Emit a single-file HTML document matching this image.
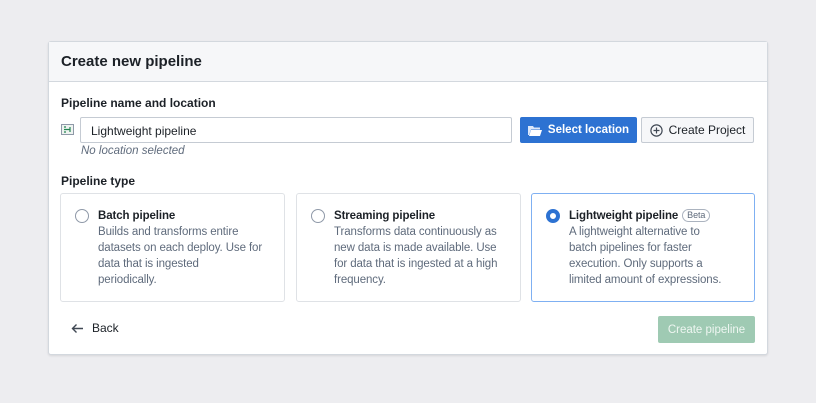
<!DOCTYPE html>
<html><head><style>
*{box-sizing:border-box;margin:0;padding:0}
body{width:816px;height:403px;background:#ededf0;font-family:"Liberation Sans",sans-serif;color:#1c2127;position:relative;overflow:hidden}
.dlg{position:absolute;left:48px;top:41px;width:720px;height:314px;background:#fff;border:1px solid #d3d8de;border-radius:3px;box-shadow:0 1px 2px rgba(0,0,0,.1)}
.hdr{height:40px;background:#f6f7f9;border-bottom:1px solid #d3d8de;padding:11px 12px;font-size:15px;font-weight:bold}
.abs{position:absolute}
.lbl{font-size:12px;font-weight:bold}
.inp{left:31px;top:75px;width:432px;height:26px;border:1px solid #c5cbd3;border-radius:2px;font-size:12px;padding:6px 10px}
.btn{top:75px;height:26px;border-radius:2px;font-size:12px;display:flex;align-items:center;justify-content:center;gap:6px}
.card{top:151px;height:109px;border:1px solid #dfe2e6;border-radius:3px;padding:14px 8px 0 37px;font-size:11.5px;line-height:16px;color:#5f6b7c;white-space:nowrap;letter-spacing:-0.1px}
.card b{color:#1c2127;display:block;line-height:16px;font-size:11.5px}
.radio{position:absolute;left:14px;top:15px;width:14px;height:14px;border:1.5px solid #8f99a8;border-radius:50%}
.card.sel{border:1px solid #7fb0f2}
.sel .radio{border:4px solid #2d72d2;background:#fff}
.beta{display:inline-block;font-size:9px;font-weight:normal;color:#5f6b7c;border:1px solid #abb3bf;border-radius:8px;padding:0 4px;line-height:11px;margin-left:4px;vertical-align:1px}
</style></head><body>
<div class="dlg">
<div class="hdr">Create new pipeline</div>
<div class="abs lbl" style="left:12px;top:54px">Pipeline name and location</div>
<svg class="abs" style="left:12px;top:82px" width="13" height="11" viewBox="0 0 13 11"><rect x=".5" y=".5" width="12" height="10" fill="#eef3f0" stroke="#8f99a8"/><path d="M3 3h2M3 5.5h2M3 8h2M5 5.5h4M9 3v5" stroke="#238551" stroke-width="1.2" fill="none"/></svg>
<div class="abs inp">Lightweight pipeline</div>
<div class="abs" style="left:32px;top:103px;font-size:11.5px;font-style:italic;color:#5f6b7c">No location selected</div>
<div class="abs btn" style="left:471px;width:117px;background:#2d72d2;color:#fff;font-weight:bold;font-size:11.5px"><svg width="14" height="11" viewBox="0 0 14 11"><path d="M0 1h5l1 1.5h6v2H3L1 10H0z" fill="#dbe7fa"/><path d="M3 5h11l-2 6H1z" fill="#fff"/></svg>Select location</div>
<div class="abs btn" style="left:592px;width:113px;background:#f6f7f9;border:1px solid #c5cbd3"><svg width="13" height="13" viewBox="0 0 13 13"><circle cx="6.5" cy="6.5" r="5.6" fill="none" stroke="#404854" stroke-width="1.2"/><path d="M6.5 3.5v6M3.5 6.5h6" stroke="#404854" stroke-width="1.2"/></svg>Create Project</div>
<div class="abs lbl" style="left:12px;top:132px">Pipeline type</div>
<div class="abs card" style="left:11px;width:225px"><span class="radio"></span><b>Batch pipeline</b>Builds and transforms entire<br>datasets on each deploy. Use for<br>data that is ingested<br>periodically.</div>
<div class="abs card" style="left:247px;width:225px"><span class="radio"></span><b>Streaming pipeline</b>Transforms data continuously as<br>new data is made available. Use<br>for data that is ingested at a high<br>frequency.</div>
<div class="abs card sel" style="left:482px;width:224px"><span class="radio"></span><b>Lightweight pipeline<span class="beta">Beta</span></b>A lightweight alternative to<br>batch pipelines for faster<br>execution. Only supports a<br>limited amount of expressions.</div>
<svg class="abs" style="left:22px;top:281px" width="13" height="11" viewBox="0 0 13 11"><path d="M12 5.5H1.5M5.5 1.5l-4 4 4 4" fill="none" stroke="#404854" stroke-width="1.4"/></svg>
<div class="abs" style="left:43px;top:279px;font-size:12px">Back</div>
<div class="abs btn" style="left:609px;top:274px;width:97px;height:27px;background:#9fcab3;color:#eef6f1;font-size:11.5px">Create pipeline</div>
</div>
</body></html>
